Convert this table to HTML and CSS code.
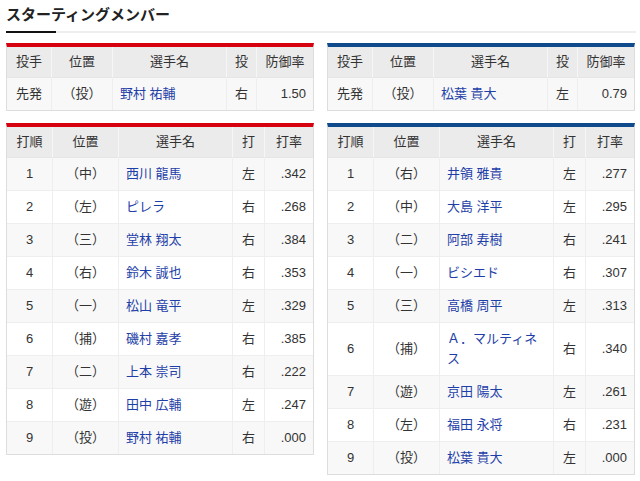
FILE: index.html
```html
<!DOCTYPE html>
<html lang="ja">
<head>
<meta charset="utf-8">
<title>スターティングメンバー</title>
<link rel="stylesheet" href="styles.css">
</head>
<body>
<div class="page">
  <h2 class="title">スターティングメンバー</h2>
  <div class="title-rule"><span class="title-rule-mark"></span></div>
  <div class="grid">
    <table class="tbl home pitcher">
      <colgroup><col class="c1"><col class="c2"><col class="c3"><col class="c4"><col class="c5"></colgroup>
      <thead><tr><th>投手</th><th>位置</th><th>選手名</th><th>投</th><th>防御率</th></tr></thead>
      <tbody>
        <tr><td class="ctr">先発</td><td class="ctr">（投）</td><td class="name">野村 祐輔</td><td class="ctr">右</td><td class="num">1.50</td></tr>
      </tbody>
    </table>
    <table class="tbl away pitcher">
      <colgroup><col class="c1"><col class="c2"><col class="c3"><col class="c4"><col class="c5"></colgroup>
      <thead><tr><th>投手</th><th>位置</th><th>選手名</th><th>投</th><th>防御率</th></tr></thead>
      <tbody>
        <tr><td class="ctr">先発</td><td class="ctr">（投）</td><td class="name">松葉 貴大</td><td class="ctr">左</td><td class="num">0.79</td></tr>
      </tbody>
    </table>
    <table class="tbl home lineup">
      <colgroup><col class="c1"><col class="c2"><col class="c3"><col class="c4"><col class="c5"></colgroup>
      <thead><tr><th>打順</th><th>位置</th><th>選手名</th><th>打</th><th>打率</th></tr></thead>
      <tbody>
        <tr><td class="ctr">1</td><td class="ctr">（中）</td><td class="name">西川 龍馬</td><td class="ctr">左</td><td class="num">.342</td></tr>
        <tr><td class="ctr">2</td><td class="ctr">（左）</td><td class="name">ピレラ</td><td class="ctr">右</td><td class="num">.268</td></tr>
        <tr><td class="ctr">3</td><td class="ctr">（三）</td><td class="name">堂林 翔太</td><td class="ctr">右</td><td class="num">.384</td></tr>
        <tr><td class="ctr">4</td><td class="ctr">（右）</td><td class="name">鈴木 誠也</td><td class="ctr">右</td><td class="num">.353</td></tr>
        <tr><td class="ctr">5</td><td class="ctr">（一）</td><td class="name">松山 竜平</td><td class="ctr">左</td><td class="num">.329</td></tr>
        <tr><td class="ctr">6</td><td class="ctr">（捕）</td><td class="name">磯村 嘉孝</td><td class="ctr">右</td><td class="num">.385</td></tr>
        <tr><td class="ctr">7</td><td class="ctr">（二）</td><td class="name">上本 崇司</td><td class="ctr">右</td><td class="num">.222</td></tr>
        <tr><td class="ctr">8</td><td class="ctr">（遊）</td><td class="name">田中 広輔</td><td class="ctr">左</td><td class="num">.247</td></tr>
        <tr><td class="ctr">9</td><td class="ctr">（投）</td><td class="name">野村 祐輔</td><td class="ctr">右</td><td class="num">.000</td></tr>
      </tbody>
    </table>
    <table class="tbl away lineup">
      <colgroup><col class="c1"><col class="c2"><col class="c3"><col class="c4"><col class="c5"></colgroup>
      <thead><tr><th>打順</th><th>位置</th><th>選手名</th><th>打</th><th>打率</th></tr></thead>
      <tbody>
        <tr><td class="ctr">1</td><td class="ctr">（右）</td><td class="name">井領 雅貴</td><td class="ctr">左</td><td class="num">.277</td></tr>
        <tr><td class="ctr">2</td><td class="ctr">（中）</td><td class="name">大島 洋平</td><td class="ctr">左</td><td class="num">.295</td></tr>
        <tr><td class="ctr">3</td><td class="ctr">（二）</td><td class="name">阿部 寿樹</td><td class="ctr">右</td><td class="num">.241</td></tr>
        <tr><td class="ctr">4</td><td class="ctr">（一）</td><td class="name">ビシエド</td><td class="ctr">右</td><td class="num">.307</td></tr>
        <tr><td class="ctr">5</td><td class="ctr">（三）</td><td class="name">高橋 周平</td><td class="ctr">左</td><td class="num">.313</td></tr>
        <tr><td class="ctr">6</td><td class="ctr">（捕）</td><td class="name">Ａ．マルティネス</td><td class="ctr">右</td><td class="num">.340</td></tr>
        <tr><td class="ctr">7</td><td class="ctr">（遊）</td><td class="name">京田 陽太</td><td class="ctr">左</td><td class="num">.261</td></tr>
        <tr><td class="ctr">8</td><td class="ctr">（左）</td><td class="name">福田 永将</td><td class="ctr">右</td><td class="num">.231</td></tr>
        <tr><td class="ctr">9</td><td class="ctr">（投）</td><td class="name">松葉 貴大</td><td class="ctr">左</td><td class="num">.000</td></tr>
      </tbody>
    </table>
  </div>
</div>
</body>
</html>
```
FILE: styles.css
```css
html, body {
  margin: 0;
  padding: 0;
  background: #ffffff;
}
body {
  font-family: "Liberation Sans", "Noto Sans CJK JP", sans-serif;
  font-size: 13px;
  line-height: 20px;
  color: #333333;
}
.page {
  width: 630px;
  padding: 3px 0 0 6px;
}
.title {
  margin: 0;
  font-size: 15px;
  line-height: 22px;
  font-weight: bold;
  color: #222222;
  font-family: "Noto Sans CJK JP", sans-serif;
}
.title-rule {
  margin-top: 6px;
  height: 2px;
  background: #eeeeee;
}
.title-rule-mark {
  display: block;
  width: 50px;
  height: 2px;
  background: #111111;
}
.grid {
  margin-top: 10px;
  display: grid;
  grid-template-columns: 308px 308px;
  column-gap: 13px;
  row-gap: 12px;
  align-items: start;
}
.tbl {
  width: 308px;
  table-layout: fixed;
  border-collapse: separate;
  border-spacing: 0;
  border: 1px solid #dddddd;
  border-top: 4px solid #d7000f;
}
.tbl.away {
  border-top-color: #0f4a8c;
}
.pitcher .c1 { width: 44px; }
.pitcher .c2 { width: 61px; }
.pitcher .c3 { width: 114px; }
.pitcher .c4 { width: 30px; }
.pitcher .c5 { width: 57px; }
.lineup .c1 { width: 45px; }
.lineup .c2 { width: 66px; }
.lineup .c3 { width: 114px; }
.lineup .c4 { width: 32px; }
.lineup .c5 { width: 49px; }
.tbl th {
  background: #ebebeb;
  font-weight: normal;
  padding: 5px 0;
  text-align: center;
  border-left: 1px solid #f6f6f6;
  border-bottom: 1px solid #e6e6e6;
}
.tbl td {
  padding: 6px 0;
  border-left: 1px solid #eeeeee;
  border-bottom: 1px solid #eeeeee;
  vertical-align: middle;
}
.tbl th:first-child,
.tbl td:first-child {
  border-left: none;
}
.tbl tbody tr:last-child td {
  border-bottom: none;
}
.tbl tbody tr:nth-child(odd) td {
  background: #f8f8f8;
}
.tbl tbody tr:nth-child(even) td {
  background: #ffffff;
}
.ctr {
  text-align: center;
}
.name {
  text-align: left;
  padding-left: 7px !important;
  padding-right: 7px !important;
  color: #1f3fa8;
}
.num {
  text-align: right;
  padding-right: 7px !important;
}
```
